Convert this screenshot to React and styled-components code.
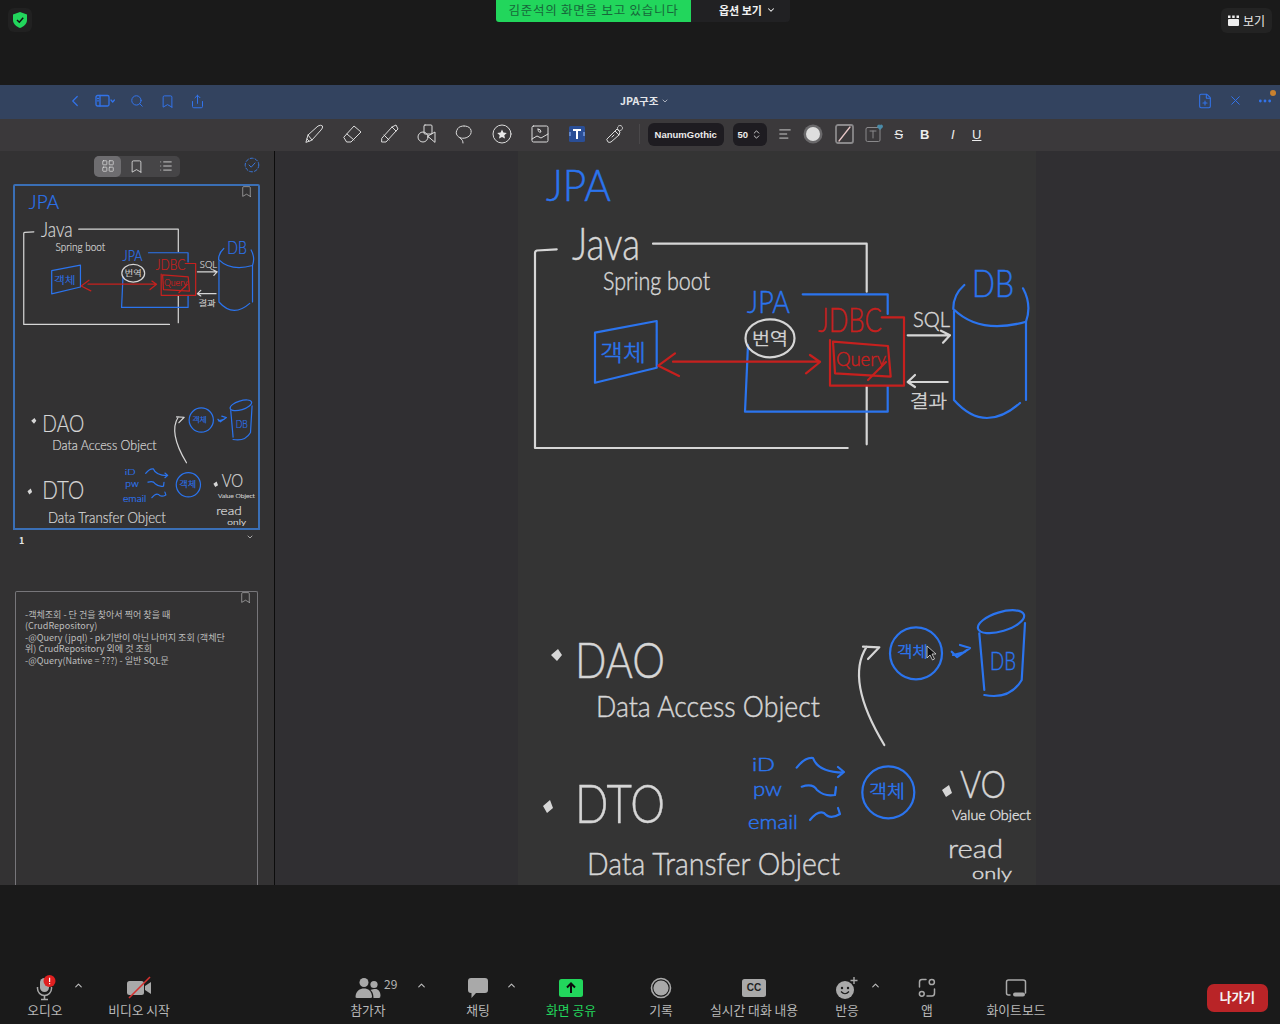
import React from "react";
import styled, { createGlobalStyle } from "styled-components";
import { ChevronLeft, ChevronDown, ChevronUp, Search, Bookmark, Share, FilePlus, X, MoreHorizontal, LayoutGrid, List, ChevronsUpDown, AlignLeft } from "lucide-react";

const Global = createGlobalStyle`
  html, body { margin: 0; padding: 0; background: #1a1a1a; }
  body { font-family: "Noto Sans CJK KR", "Noto Sans", sans-serif; }
  * { box-sizing: border-box; }
`;

const Root = styled.div`width: 1280px; height: 1024px; display: flex; flex-direction: column; background: #1a1a1a; overflow: hidden;`;

/* top meeting bar */
const TopBar = styled.header`height: 85px; flex: none; display: grid; grid-template-columns: 496px auto 1fr; align-items: start;`;
const ShieldBox = styled.div`width: 24px; height: 24px; margin: 8px 0 0 8px; border-radius: 6px; background: #212121; display: flex; align-items: center; justify-content: center;`;
const ShareGroup = styled.div`display: flex; height: 22px;`;
const ShareBanner = styled.div`width: 195px; background: #22d65c; color: #17663a; font-size: 12.5px; letter-spacing: .75px; padding-bottom: 3px; display: flex; align-items: center; justify-content: center; border-bottom-left-radius: 3px;`;
const OptionBtn = styled.div`width: 99px; background: #212123; color: #f2f2f2; font-size: 11px; font-weight: 700; display: flex; align-items: center; gap: 4px; padding: 0 0 2px 28px; border-bottom-right-radius: 4px;`;
const ViewBtn = styled.div`justify-self: end; margin: 8px 8px 0 0; width: 51px; height: 25px; border-radius: 6px; background: #232323; color: #e8e8e8; font-size: 12px; display: flex; align-items: center; gap: 4px; padding-left: 7px;`;

/* goodnotes window */
const AppWin = styled.section`height: 800px; flex: none; display: flex; flex-direction: column;`;
const NavBar = styled.div`height: 34px; flex: none; background: #33435f; display: flex; align-items: center; position: relative; color: #3273ea; padding: 0 0 2px 66px;`;
const NavIcon = styled.span`display: flex; width: ${p => p.$w || 30}px; justify-content: center;`;
const Title = styled.div`position: absolute; left: 620px; top: 8px; color: #e4e6ea; font-size: 10.5px; font-weight: 700; display: flex; align-items: center; gap: 3px; line-height: 15px;`;
const NavRight = styled.div`margin-left: auto; display: flex;`;
const Dot = styled.span`position: absolute; left: 1270px; top: 5px; width: 6px; height: 6px; border-radius: 50%; background: #c9812f;`;

const ToolBar = styled.div`height: 32px; flex: none; background: #3b393b; display: flex; align-items: center; padding: 0 0 2px 304px; color: #dcdcdc;`;
const Tool = styled.span`width: 20px; height: 20px; flex: none; margin-left: ${p => p.$ml ?? 17.6}px; display: flex; align-items: center; justify-content: center;
  &:first-child { margin-left: 0; }`;
const Sep = styled.span`width: 1px; height: 20px; background: #4a484a; margin: 0 8px 0 14px;`;
const Pill = styled.div`height: 23px; width: ${p => p.$w}px; margin-left: ${p => p.$ml || 0}px; border-radius: 6px; background: #1e1c21; color: #ececec; font-family: "Liberation Sans", sans-serif; font-size: 9.5px; font-weight: 700; display: flex; align-items: center; justify-content: center; gap: 3px;`;
const Letter = styled.span`font-family: "Liberation Sans", sans-serif; font-size: 13px; color: #ececec; font-weight: ${p => p.$b ? 700 : 400}; font-style: ${p => p.$i ? "italic" : "normal"}; text-decoration: ${p => p.$u ? "underline" : p.$s ? "line-through" : "none"};`;

const Body = styled.div`flex: 1; display: flex; min-height: 0;`;
const SideBar = styled.aside`width: 275px; flex: none; background: #333233; border-right: 1px solid #0c0c0c; display: flex; flex-direction: column; position: relative; overflow: hidden;`;
const SideHead = styled.div`height: 33px; flex: none; display: flex; align-items: center; padding: 0 0 3px 94px; position: relative;`;
const Segment = styled.div`width: 86px; height: 21px; border-radius: 5px; background: #464547; display: flex; align-items: center; color: #e3e3e3;`;
const SegItem = styled.span`width: ${p => p.$w}px; height: 21px; border-radius: 5px; display: flex; align-items: center; justify-content: center; background: ${p => p.$on ? "#6e6d70" : "transparent"};`;
const CheckBadge = styled.span`position: absolute; left: 244px; top: 6px; display: flex; color: #3a76d8;`;
const Thumb = styled.div`position: relative; margin-left: ${p => p.$active ? 13 : 15}px; width: ${p => p.$active ? 247 : 243}px; height: ${p => p.$h}px; flex: none;
  border: ${p => p.$active ? "2px solid #3a6fb6" : "1px solid #77767a"};
  border-bottom: ${p => p.$active ? "2px solid #3a6fb6" : "none"};
  border-radius: 2px 2px 0 0; overflow: hidden;`;
const ThumbMark = styled.span`position: absolute; right: 5px; top: -1px; color: #d8d8d8; display: flex;`;
const PageLabel = styled.div`height: 22px; padding: 3px 0 0 19px; display: flex; justify-content: space-between; color: #e6e6e6; font-size: 9px; font-weight: 700; width: 254px; line-height: 16px; margin-bottom: 39px; flex: none;`;
const NoteText = styled.p`margin: 17px 0 0 9px; width: 210px; color: #bdbdbd; font-size: 9.05px; line-height: 11.4px; word-break: keep-all;`;

const Canvas = styled.main`flex: 1; background: #302f32; position: relative; display: flex; padding-left: 243px; overflow: hidden;`;
const Page = styled.div`width: 518px; height: 734px; background: #343434; flex: none;`;
const SketchSvg = styled.svg`display: block; width: 100%; height: ${p => p.$h};`;
const Ink = styled.text`fill: ${p => p.$c}; stroke: ${p => p.$c}; stroke-width: .45px; font-family: "Lato", "Noto Sans CJK KR", sans-serif; font-weight: 300;`;

/* bottom */
const BottomBar = styled.footer`flex: 1; display: flex; align-items: flex-end; padding: 0 12px 5px 0; position: relative;`;
const Control = styled.div`width: ${p => p.$w}px; margin-left: ${p => p.$ml || 0}px; height: 46px; flex: none; position: relative; display: flex; flex-direction: column; align-items: center; color: #b4b4b4;`;
const CtrlIcon = styled.span`height: 29px; display: flex; align-items: center; justify-content: center;`;
const Label = styled.span`font-size: 12.8px; line-height: 16px; white-space: nowrap; color: ${p => p.$green ? "#22d65c" : "#b8b8b8"};`;
const Caret = styled.span`position: absolute; left: ${p => p.$x}px; top: 7px; color: #bdbdbd; display: flex;`;
const Count = styled.span`position: absolute; left: 64px; top: 2px; font-size: 12px; color: #b4b4b4;`;
const Leave = styled.div`margin-left: auto; width: 61px; height: 28px; margin-bottom: 7px; padding-bottom: 3px; border-radius: 7px; background: #b92427; color: #f4f4f4; font-size: 12.8px; font-weight: 700; display: flex; align-items: center; justify-content: center;`;

const WHITE = "#d6d6d6", BLUE = "#2b74ee", RED = "#c7201e";

const whitePaths = [
  "M556.7 249.3 L537 250.5 Q535 251 535 253 L535 448 L847.7 448",
  "M653 243.7 L866.7 243.7 L866.7 291.7", "M866.7 386.7 L866.7 444.3",
  "M907.7 335.3 L950 335.3 M941 330.7 L950 335.3 L943 342.7",
  "M947.7 382 L907.7 382 M915 375 L907.7 382 L915 387",
  "M884.3 745 Q845 680 866.7 646.7 M863 646.7 L879.3 647.3 L868 659"
];
const bluePaths = [
  "M802.7 294.3 L887.7 294.3 L887.7 314", "M887.7 386.7 L887.7 411.7 L745 411.7 L748 345",
  "M595 332.7 L656.7 321 L656.7 367.7 L595 382.7 Z",
  "M964.3 285 Q953 295 953.3 309 Q980 335 1026 321.7 Q1032 305 1023 288.3",
  "M954 311 L954 400 Q970 418 987 418 Q1003 418 1020 403 M1026 321.7 L1026 400",
  "M951.7 651.7 L957 657 L970 648 L960 645 M953 655 L965 652",
  "M979.3 633.3 L984.3 690 M984.3 695 Q1010 700 1021.7 680 L1025 623",
  "M796.7 767.7 Q805 757 813 758 Q818 772 843 772.7 M838 767 L844 772 L838 777",
  "M801.7 786.7 Q813 783 817 790 Q825 797 835 795 L836 787",
  "M810 820 Q818 810 824 813 Q830 820 840 814 L838 808"
];
const redPaths = [
  "M881.7 317.3 L904 317.3 L904 385.7 L830 385.7 L830 340",
  "M833 341.7 L888 346 L890.7 376.7 L835 373.3 Z", "M868 380 L886 362",
  "M673 361.7 L820 361.7 M806 373.3 L820 362 L810 355",
  "M675 353.3 L658.3 365.7 L679 376"
];
const inks = [
  ["JPA", 546, 201, 44, 65, BLUE], ["Java", 572, 260, 46, 68, WHITE], ["Spring boot", 603, 290, 26, 107, WHITE],
  ["JPA", 747, 313, 32, 43, BLUE], ["번역", 752, 345, 17, 36, WHITE], ["JDBC", 818, 332, 34, 64, RED],
  ["SQL", 913, 327, 22, 37, WHITE], ["결과", 910, 408, 18, 37, WHITE], ["DB", 972, 297, 38, 42, BLUE],
  ["객체", 600, 361, 23, 46, BLUE], ["Query", 836, 366, 19, 50, RED],
  ["DAO", 575, 678, 50, 90, WHITE], ["Data Access Object", 596, 717, 30, 224, WHITE],
  ["DTO", 575, 823, 54, 90, WHITE], ["Data Transfer Object", 587, 875, 32, 253, WHITE],
  ["객체", 897, 657, 15, 31, BLUE], ["DB", 990, 670, 26, 26, BLUE],
  ["iD", 752, 771, 18, 23, BLUE], ["pw", 753, 796, 20, 29, BLUE], ["email", 748, 829, 20, 50, BLUE],
  ["객체", 869, 798, 18, 36, BLUE], ["VO", 960, 798, 38, 46, WHITE], ["Value Object", 952, 820, 14, 79, WHITE],
  ["read", 948, 858, 26, 55, WHITE], ["only", 972, 879, 16, 40, WHITE]
];

function Sketch({ h, sw = 2.2, children }) {
  return (
    <SketchSvg viewBox="518 151 518 734" preserveAspectRatio="xMidYMin meet" $h={h}>
      <path d="M551 655 l7 -6 l4 6 l-5 6 z M543 806 l7 -6 l3 8 l-6 5 z M942 790 l7 -5 l3 8 l-6 4 z" fill={WHITE} />
      <g fill="none" strokeLinecap="round" strokeLinejoin="round" strokeWidth={sw}>
        {whitePaths.map((d, i) => <path key={i} d={d} stroke={WHITE} />)}
        {bluePaths.map((d, i) => <path key={i} d={d} stroke={BLUE} />)}
        <ellipse cx="770" cy="338.3" rx="24.5" ry="19" stroke={WHITE} />
        <circle cx="916" cy="653.3" r="26" stroke={BLUE} />
        <circle cx="888.3" cy="792.3" r="26" stroke={BLUE} />
        <ellipse cx="1001" cy="621.7" rx="24" ry="9.5" stroke={BLUE} transform="rotate(-17 1001 621.7)" />
        {redPaths.map((d, i) => <path key={i} d={d} stroke={RED} />)}
      </g>
      {inks.map(([t, x, y, fs, len, c], i) => (
        <Ink key={i} x={x} y={y} fontSize={fs} textLength={len} lengthAdjust="spacingAndGlyphs" $c={c}>{t}</Ink>
      ))}
      {children}
    </SketchSvg>
  );
}

const Svg = ({ s = 20, w, h, sw = 1, children, c = "currentColor" }) => (
  <svg width={w || s} height={h || s} viewBox={`0 0 ${w || s} ${h || s}`} fill="none" stroke={c} strokeWidth={sw} strokeLinecap="round" strokeLinejoin="round">{children}</svg>
);

const Shield = () => (
  <svg width="14" height="16" viewBox="0 0 14 16"><path d="M7 0 L14 2.5 V8 C14 12 10.5 14.8 7 16 C3.5 14.8 0 12 0 8 V2.5 Z" fill="#22d65c" /><path d="M4 8 L6.3 10.2 L10.2 5.8" fill="none" stroke="#111" strokeWidth="1.5" /></svg>
);
const Film = () => (
  <svg width="11" height="11" viewBox="0 0 11 11" fill="#eee"><rect x="0" y="4" width="11" height="7" rx="1" /><rect x="0" y="0.5" width="2.5" height="2.5" /><rect x="4.2" y="0.5" width="2.5" height="2.5" /><rect x="8.5" y="0.5" width="2.5" height="2.5" /></svg>
);
const PanelIcon = () => (
  <Svg w={22} h={14} sw={1.3}><rect x="1" y="1.5" width="13" height="10.5" rx="1.5" /><path d="M5 1.5 V12 M2.5 4.5 H3.5 M2.5 6.8 H3.5" /><path d="M16 6 L17.7 8 L19.4 6" /></Svg>
);

/* toolbar drawings */
const Pen = () => <Svg><path d="M2 18 L4 11 L14 2 Q17 0.5 18.5 2 Q19 4 17 6 L8 16 Z M4 11 L8 16 M3 15 L5 17" /></Svg>;
const Eraser = () => <Svg><path d="M2 13 L12 2 L19 8 L9 18 L5 18 Z M5 10 L12 16" /></Svg>;
const Marker = () => <Svg><path d="M3 14 L13 3 L17 1 L19 5 L17 7 L7 18 L3 18 Z M5 11 L10 16 M13 3 L17 7" /></Svg>;
const Shapes = () => <Svg><rect x="7" y="1" width="8" height="9" rx="1" /><circle cx="6" cy="13" r="5" /><path d="M11 12 L18 8 L18 18 Z" /></Svg>;
const Lasso = () => <Svg><path d="M10 2 C15 2 18 5 17 9 C16 13 11 15 7 14 C3 13 1 9 3 6 C4 3 7 2 10 2 M6 14 Q9 16 9 19" strokeDasharray="3 .8" /></Svg>;
const Star = () => <Svg><circle cx="10" cy="10" r="9" /><path d="M10 5.5 L11.4 8.6 L14.8 9 L12.3 11.2 L13 14.5 L10 12.9 L7 14.5 L7.7 11.2 L5.2 9 L8.6 8.6 Z" fill="#e8e8e8" stroke="none" /></Svg>;
const ImageIco = () => <Svg><rect x="2" y="2" width="16" height="16" rx="1.5" /><path d="M2 15 L7 12 L11 14 L18 10 M8 5 Q11 5 11 8 Q8 9 8 5" /></Svg>;
const TextBlue = () => (
  <svg width="16" height="16" viewBox="0 0 16 16"><rect width="16" height="16" rx="1.5" fill="#2a4e96" /><path d="M4 4 H12 M8 4 V13" stroke="#fff" strokeWidth="2" /><path d="M1 6 V10 M15 6 V10" stroke="#9cc0ff" /></svg>
);
const Spray = () => <Svg><path d="M2 15 L10 7 L14 11 L6 18 Q4 19 3 18 Z M9 11 L7 13" /><circle cx="15" cy="4" r="2.5" strokeDasharray="1.2 1.2" /><path d="M10 7 L12 5 L15 8 L14 11" /></Svg>;
const ColorDot = () => (
  <svg width="20" height="20" viewBox="0 0 20 20"><circle cx="10" cy="10" r="9.5" fill="#6a696b" /><circle cx="10" cy="10" r="7" fill="#dedede" /></svg>
);
const SlashBox = () => <Svg sw={1.3}><rect x="2" y="1" width="17" height="18" rx="2" stroke="#8a898b" strokeWidth="1.8" /><path d="M5 17 L16 3" stroke="#e6c6c6" /></Svg>;
const TBox = () => (
  <Svg><rect x="3" y="3.5" width="14" height="14" rx="1.5" stroke="#8a898b" /><path d="M7 7 H13 M10 7 V14" stroke="#8a898b" /><path d="M17 6 L14 3 Q14 0.5 16 0.5 Q17 0.5 17 1.5 Q17 0.5 18.5 0.5 Q20 0.5 20 3 Z" fill="#4a8ba8" stroke="none" /></Svg>
);

/* bottom icons */
const Mic = () => (
  <svg width="22" height="26" viewBox="0 0 22 26" fill="#a9a9a9">
    <rect x="6" y="3" width="9" height="14" rx="4.5" />
    <path d="M3.5 12 V13.5 A7 7 0 0 0 17.5 13.5 V12" fill="none" stroke="#a9a9a9" strokeWidth="1.5" />
    <path d="M10.5 20.5 V24 M7 24.5 H14" stroke="#a9a9a9" strokeWidth="1.6" />
    <circle cx="15.5" cy="6" r="6" fill="#e02020" />
    <path d="M15 2.8 H16.2 V7 H15 Z M15 8 H16.2 V9.3 H15 Z" fill="#fff" />
  </svg>
);
const Cam = () => (
  <svg width="26" height="24" viewBox="0 0 26 24">
    <rect x="1" y="5" width="17" height="14" rx="2.5" fill="#a9a9a9" />
    <path d="M19 10 L25 6 V18 L19 14 Z" fill="#a9a9a9" />
    <path d="M3 22 L24 1" stroke="#d5312f" strokeWidth="1.6" />
  </svg>
);
const People = () => (
  <svg width="26" height="22" viewBox="0 0 26 22" fill="#a9a9a9">
    <circle cx="9" cy="5.5" r="4.5" /><circle cx="19" cy="7.5" r="3.6" />
    <path d="M0.5 20 C0.5 14 5 11.5 9 11.5 C13 11.5 17 14 17 20 Q17 21 15.5 21 H2 Q0.5 21 0.5 20 Z" />
    <path d="M18.5 21 C18.5 16 17 14.5 15.5 13 C17 12 19 12 20.5 12 C23 12 25.5 14.5 25.5 18.5 Q25.5 21 24 21 Z" />
  </svg>
);
const Chat = () => (
  <svg width="22" height="24" viewBox="0 0 22 24" fill="#a9a9a9"><path d="M4 2 H18 Q21 2 21 5 V14 Q21 17 18 17 H9 L4.5 22 V17 H4 Q1 17 1 14 V5 Q1 2 4 2 Z" /></svg>
);
const ShareIco = () => (
  <svg width="24" height="18" viewBox="0 0 24 18"><rect width="24" height="18" rx="2.5" fill="#22d65c" /><path d="M12 14 V5 M8 8.5 L12 4.5 L16 8.5" stroke="#0c0c0c" strokeWidth="2" fill="none" /></svg>
);
const Rec = () => (
  <svg width="22" height="22" viewBox="0 0 22 22"><circle cx="11" cy="11" r="9.5" fill="none" stroke="#a9a9a9" strokeWidth="1.6" /><circle cx="11" cy="11" r="7.6" fill="#a9a9a9" /></svg>
);
const CCBox = styled.span`width: 24px; height: 18px; border-radius: 2.5px; background: #a9a9a9; color: #222; font-family: "Liberation Sans", sans-serif; font-size: 10px; font-weight: 700; display: flex; align-items: center; justify-content: center;`;
const Smile = () => (
  <svg width="24" height="24" viewBox="0 0 24 24">
    <circle cx="10" cy="14" r="9" fill="#a9a9a9" />
    <circle cx="7" cy="12" r="1.2" fill="#1a1a1a" /><circle cx="13" cy="12" r="1.2" fill="#1a1a1a" />
    <path d="M6 15.5 Q10 20 14 15.5" stroke="#1a1a1a" strokeWidth="1.2" fill="none" />
    <path d="M19 1 V8 M15.5 4.5 H22.5" stroke="#a9a9a9" strokeWidth="1.4" />
  </svg>
);
const Apps = () => (
  <svg width="18" height="20" viewBox="0 0 18 20" fill="none" stroke="#a9a9a9" strokeWidth="1.5" strokeLinecap="round">
    <path d="M1.5 9 V4 Q1.5 1.5 4 1.5 H8 M16.5 11 V15 Q16.5 18 14 18 H9" />
    <circle cx="13.8" cy="4" r="2.6" /><circle cx="3.8" cy="15.8" r="2.4" />
  </svg>
);
const Board = () => (
  <svg width="22" height="20" viewBox="0 0 22 20" fill="none" stroke="#a9a9a9" strokeWidth="1.5" strokeLinecap="round">
    <path d="M5 17 H3.5 Q1.5 17 1.5 15 V4 Q1.5 2 3.5 2 H18 Q20.5 2 20.5 4 V15" />
    <rect x="8" y="14.5" width="12" height="4" rx="2" fill="#a9a9a9" stroke="none" />
  </svg>
);

const Up = () => <ChevronUp size={11} strokeWidth={2.5} />;

export default function App() {
  return (
    <Root>
      <Global />
      <TopBar>
        <ShieldBox><Shield /></ShieldBox>
        <ShareGroup>
          <ShareBanner>김준석의 화면을 보고 있습니다</ShareBanner>
          <OptionBtn>옵션 보기 <ChevronDown size={10} strokeWidth={2.5} /></OptionBtn>
        </ShareGroup>
        <ViewBtn><Film />보기</ViewBtn>
      </TopBar>

      <AppWin>
        <NavBar>
          <NavIcon $w={18}><ChevronLeft size={18} strokeWidth={1.6} /></NavIcon>
          <NavIcon $w={44}><PanelIcon /></NavIcon>
          <NavIcon $w={18}><Search size={14} strokeWidth={1.7} /></NavIcon>
          <NavIcon $w={42}><Bookmark size={15} strokeWidth={1.6} /></NavIcon>
          <NavIcon $w={18}><Share size={15} strokeWidth={1.6} /></NavIcon>
          <Title>JPA구조 <ChevronDown size={8} strokeWidth={2} /></Title>
          <NavRight>
            <NavIcon><FilePlus size={16} strokeWidth={1.6} /></NavIcon>
            <NavIcon><X size={15} strokeWidth={1.6} /></NavIcon>
            <NavIcon><MoreHorizontal size={16} strokeWidth={2.2} /></NavIcon>
          </NavRight>
          <Dot />
        </NavBar>

        <ToolBar>
          <Tool><Pen /></Tool>
          <Tool><Eraser /></Tool>
          <Tool><Marker /></Tool>
          <Tool><Shapes /></Tool>
          <Tool><Lasso /></Tool>
          <Tool><Star /></Tool>
          <Tool><ImageIco /></Tool>
          <Tool><TextBlue /></Tool>
          <Tool><Spray /></Tool>
          <Sep />
          <Pill $w={76}>NanumGothic</Pill>
          <Pill $w={34} $ml={9}>50 <ChevronsUpDown size={11} strokeWidth={1.8} /></Pill>
          <Tool $ml={8}><AlignLeft size={14} strokeWidth={1.5} /></Tool>
          <Tool $ml={8}><ColorDot /></Tool>
          <Tool $ml={11}><SlashBox /></Tool>
          <Tool $ml={9}><TBox /></Tool>
          <Tool $ml={6}><Letter $s>S</Letter></Tool>
          <Tool $ml={6}><Letter $b>B</Letter></Tool>
          <Tool $ml={8}><Letter $i>I</Letter></Tool>
          <Tool $ml={4}><Letter $u>U</Letter></Tool>
        </ToolBar>

        <Body>
          <SideBar>
            <SideHead>
              <Segment>
                <SegItem $w={27} $on><LayoutGrid size={14} strokeWidth={1.2} /></SegItem>
                <SegItem $w={31}><Bookmark size={15} strokeWidth={1.3} /></SegItem>
                <SegItem $w={28}><List size={14} strokeWidth={1.4} /></SegItem>
              </Segment>
              <CheckBadge>
                <Svg s={16} sw={1}><circle cx="8" cy="8" r="6.8" strokeDasharray="3 2" /><path d="M5 8 L7.2 10.2 L11 6" /></Svg>
              </CheckBadge>
            </SideHead>
            <Thumb $active $h={346}>
              <Sketch h="342px" sw={2.6} />
              <ThumbMark><Bookmark size={13} strokeWidth={1} /></ThumbMark>
            </Thumb>
            <PageLabel>1 <ChevronDown size={8} strokeWidth={2} /></PageLabel>
            <Thumb $h={294}>
              <ThumbMark><Bookmark size={13} strokeWidth={1} /></ThumbMark>
              <NoteText>
                -객체조회 - 단 건을 찾아서 찍어 찾을 때<br />
                (CrudRepository)<br />
                -@Query (jpql) - pk기반이 아닌 나머지 조회 (객체단<br />
                위) CrudRepository 외에 것 조회<br />
                -@Query(Native = ???) - 일반 SQL문
              </NoteText>
            </Thumb>
          </SideBar>
          <Canvas>
            <Page>
              <Sketch h="734px">
                <path d="M927 646 L927 658 L930 655 L932.5 660 L934.5 659 L932 654 L936 654 Z" fill="#111" stroke="#ddd" strokeWidth=".8" />
              </Sketch>
            </Page>
          </Canvas>
        </Body>
      </AppWin>

      <BottomBar>
        <Control $w={90}><CtrlIcon><Mic /></CtrlIcon><Label>오디오</Label><Caret $x={73}><Up /></Caret></Control>
        <Control $w={98}><CtrlIcon><Cam /></CtrlIcon><Label>비디오 시작</Label></Control>
        <Control $w={96} $ml={132}><CtrlIcon><People /></CtrlIcon><Label>참가자</Label><Count>29</Count><Caret $x={96}><Up /></Caret></Control>
        <Control $w={84} $ml={20}><CtrlIcon><Chat /></CtrlIcon><Label>채팅</Label><Caret $x={70}><Up /></Caret></Control>
        <Control $w={102}><CtrlIcon><ShareIco /></CtrlIcon><Label $green>화면 공유</Label></Control>
        <Control $w={78}><CtrlIcon><Rec /></CtrlIcon><Label>기록</Label></Control>
        <Control $w={108}><CtrlIcon><CCBox>CC</CCBox></CtrlIcon><Label>실시간 대화 내용</Label></Control>
        <Control $w={78}><CtrlIcon><Smile /></CtrlIcon><Label>반응</Label><Caret $x={62}><Up /></Caret></Control>
        <Control $w={82}><CtrlIcon><Apps /></CtrlIcon><Label>앱</Label></Control>
        <Control $w={96}><CtrlIcon><Board /></CtrlIcon><Label>화이트보드</Label></Control>
        <Leave>나가기</Leave>
      </BottomBar>
    </Root>
  );
}
